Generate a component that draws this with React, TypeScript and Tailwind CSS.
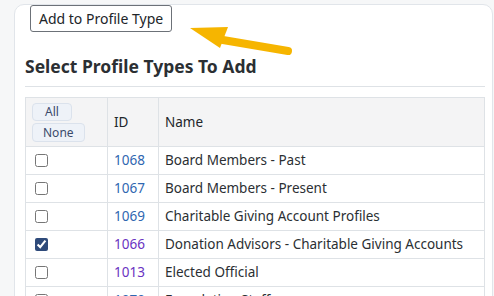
import React from 'react';

interface ProfileType {
  id: number;
  name: string;
  checked: boolean;
  visited: boolean;
}

const rows: ProfileType[] = [
  { id: 1068, name: 'Board Members - Past', checked: false, visited: false },
  { id: 1067, name: 'Board Members - Present', checked: false, visited: false },
  { id: 1069, name: 'Charitable Giving Account Profiles', checked: false, visited: false },
  { id: 1066, name: 'Donation Advisors - Charitable Giving Accounts', checked: true, visited: true },
  { id: 1013, name: 'Elected Official', checked: false, visited: true },
  { id: 1070, name: 'Foundation Staff', checked: false, visited: false },
];

export default function App() {
  return (
    <div
      className="h-[296px] overflow-hidden bg-[#f6f7f8] pl-[14px] pr-[1px] pt-[4px] text-[#212529]"
      style={{ fontFamily: '"Noto Sans", "Open Sans", sans-serif' }}
    >
      <div className="relative h-[300px] rounded-t-[10px] border border-[#e1e5ea] bg-white pl-[10px] pr-[6px]">
        <button className="ml-[5px] mt-0 h-[27px] rounded-[3px] border border-[#6c7178] bg-white px-[8px] text-[14px] leading-none text-[#212529]">
          Add to Profile Type
        </button>

        {/* callout arrow */}
        <svg
          className="absolute left-[158px] top-[14px]"
          width="130"
          height="45"
          viewBox="0 0 130 45"
        >
          <path d="M44 20 L115 32" stroke="#f6b500" strokeWidth="8" strokeLinecap="round" />
          <path d="M17 9 L55 8 L47 29 Z" fill="#f6b500" />
        </svg>

        <h2 className="mt-[22px] text-[17.5px] font-bold leading-[24px] text-[#2b2f33]">
          Select Profile Types To Add
        </h2>
        <div className="mt-[8px] h-px w-[460px] bg-[#dee2e6]" />

        <table className="mt-[10px] w-[460px] border-collapse text-[13.5px]">
          <thead>
            <tr className="h-[49px] bg-[#f4f4f5]">
              <th className="w-[82px] border border-[#dee2e6] px-[6px] text-left align-middle font-normal">
                <div className="flex flex-col items-start gap-[2px]">
                  <span className="rounded-[4px] border border-[#dbe2ec] bg-[#eef2f8] px-[12px] text-[12px] leading-[16px] text-[#3b4a6b]">
                    All
                  </span>
                  <span className="rounded-[4px] border border-[#dbe2ec] bg-[#eef2f8] px-[10px] text-[12px] leading-[17px] text-[#3b4a6b]">
                    None
                  </span>
                </div>
              </th>
              <th className="w-[51px] border border-[#dee2e6] px-[6px] text-left font-normal">ID</th>
              <th className="border border-[#dee2e6] px-[6px] text-left font-normal">Name</th>
            </tr>
          </thead>
          <tbody>
            {rows.map((row) => (
              <tr key={row.id} className="h-[28px]">
                <td className="border border-[#dee2e6] px-[9px] align-middle">
                  <input
                    type="checkbox"
                    defaultChecked={row.checked}
                    className="block h-[13px] w-[13px] accent-[#2e4a7a]"
                  />
                </td>
                <td className="border border-[#dee2e6] px-[6px]">
                  <a
                    href="#"
                    className={row.visited ? 'text-[#6a33c2]' : 'text-[#2f67b1]'}
                  >
                    {row.id}
                  </a>
                </td>
                <td className="border border-[#dee2e6] px-[6px] text-[#2b2f33]">{row.name}</td>
              </tr>
            ))}
          </tbody>
        </table>
      </div>
    </div>
  );
}
